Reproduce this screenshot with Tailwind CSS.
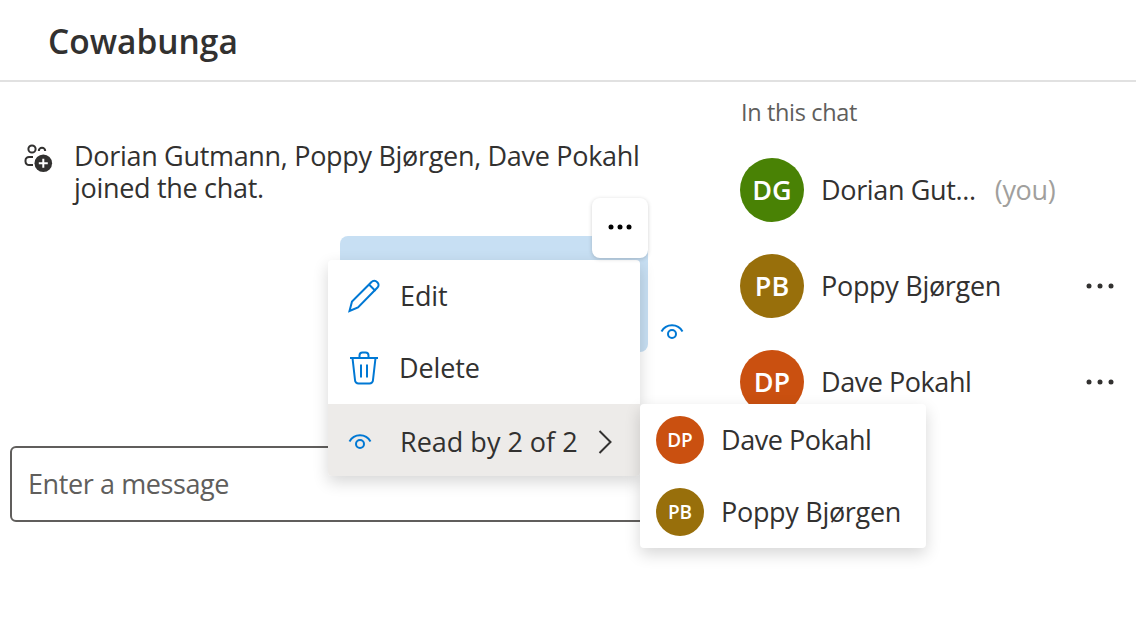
<!DOCTYPE html>
<html lang="en">

<head>
	<meta charset="UTF-8">
	<title>Cowabunga</title>
	<script src="https://cdn.jsdelivr.net/npm/@tailwindcss/browser@4"></script>
</head>

<body class="bg-white">
	<div class="relative w-[1136px] h-[640px] overflow-hidden bg-white text-[#323130] font-['Open_Sans','Noto_Sans',sans-serif] font-[380]">
		<header class="h-[82px] border-b-2 border-[#e1e1e1] pl-[48px] pt-[19px]">
			<h1 class="text-[33.500px] leading-[44px] font-semibold">Cowabunga</h1>
		</header>

		<div class="flex">
			<!-- chat column -->
			<main class="w-[741px] shrink-0 pt-[58px]">
				<div class="flex pl-[24px]">
					<svg class="w-[30px] h-[30px] mt-[3px] shrink-0" viewBox="0 0 30 30" fill="none" stroke="#323130" stroke-width="2">
						<circle cx="8" cy="6" r="3.600" />
						<path d="M14.800 8a3.200 3.200 0 0 1 6.400 0" />
						<path d="M9 14H5.500A3.500 3.500 0 0 0 1.500 17.500v1a3.500 3.500 0 0 0 4 3.500H9" />
						<circle cx="19.300" cy="20.300" r="8.800" fill="#323130" stroke="none" />
						<path d="M19.300 15.800v9M14.800 20.300h9" stroke="#fff" />
					</svg>
					<p class="ml-[20px] w-[600px] text-[27px] leading-[32px] tracking-[-0.310px]">Dorian Gutmann, Poppy Bjørgen, Dave Pokahl joined the chat.</p>
				</div>

				<div class="flex ml-[340px] mt-[32px] items-end">
					<div class="w-[308px] h-[116px] rounded-[8px] bg-[#c7dff3]"></div>
					<svg class="w-[24px] h-[16px] ml-[12px] mb-[12px]" viewBox="0 0 24 16" fill="none" stroke="#0078d4" stroke-width="2">
						<path d="M1.500 7.500a12 12 0 0 1 21 0" />
						<circle cx="12" cy="10" r="4" />
					</svg>
				</div>

				<div class="ml-[10px] mt-[94px] w-[700px] h-[76px] rounded-[6px] border-2 border-[#605e5c] flex items-center pl-[16px] text-[27px] tracking-[-0.400px] text-[#605e5c]">Enter a message</div>
			</main>

			<!-- participants -->
			<aside class="flex-1 pt-[13px]">
				<h2 class="text-[23.500px] leading-[34px] tracking-[-0.350px] text-[#605e5c]">In this chat</h2>
				<ul class="mt-[29px] flex flex-col gap-[32px]">
					<li class="flex items-center h-[64px] -ml-[1px]">
						<span class="w-[64px] h-[64px] rounded-full bg-[#498205] text-white text-[27px] font-[550] flex items-center justify-center">DG</span>
						<span class="ml-[17px] text-[27px] tracking-[-0.350px]">Dorian Gut...</span>
						<span class="ml-[19px] text-[27px] tracking-[-0.350px] text-[#a19f9d]">(you)</span>
					</li>
					<li class="flex items-center h-[64px] -ml-[1px]">
						<span class="w-[64px] h-[64px] rounded-full bg-[#986f0b] text-white text-[27px] font-[550] flex items-center justify-center">PB</span>
						<span class="ml-[17px] text-[27px] tracking-[-0.300px]">Poppy Bjørgen</span>
						<svg class="ml-auto mr-[22px] w-[28px] h-[6px]" viewBox="0 0 28 6" fill="#323130"><circle cx="3" cy="3" r="2.500" /><circle cx="14" cy="3" r="2.500" /><circle cx="25" cy="3" r="2.500" /></svg>
					</li>
					<li class="flex items-center h-[64px] -ml-[1px]">
						<span class="w-[64px] h-[64px] rounded-full bg-[#ca5010] text-white text-[27px] font-[550] flex items-center justify-center">DP</span>
						<span class="ml-[17px] text-[27px] tracking-[-0.450px]">Dave Pokahl</span>
						<svg class="ml-auto mr-[22px] w-[28px] h-[6px]" viewBox="0 0 28 6" fill="#323130"><circle cx="3" cy="3" r="2.500" /><circle cx="14" cy="3" r="2.500" /><circle cx="25" cy="3" r="2.500" /></svg>
					</li>
				</ul>
			</aside>
		</div>

		<!-- message actions button -->
		<button class="absolute left-[592px] top-[198px] z-30 w-[56px] h-[60px] rounded-[8px] bg-white shadow-[0_1px_4px_rgba(0,0,0,0.18)] flex items-center justify-center">
			<svg class="w-[24px] h-[6px] -mt-[2px]" viewBox="0 0 24 6" fill="#000"><circle cx="3" cy="3" r="2.500" /><circle cx="12" cy="3" r="2.500" /><circle cx="21" cy="3" r="2.500" /></svg>
		</button>

		<!-- message menu -->
		<div class="absolute left-[328px] top-[260px] z-20 w-[312px] h-[216px] rounded-[4px] bg-white shadow-[0_6px_16px_rgba(0,0,0,0.16)] flex flex-col text-[27px] tracking-[-0.100px]">
			<div class="h-[72px] pt-[1px] flex items-center">
				<svg class="ml-[20px] w-[32px] h-[34px] -mt-[1px]" viewBox="0 0 32 34" fill="none" stroke="#0078d4" stroke-width="2">
					<path d="M1.500 32l2.500-9.500L23.500 3a3.500 3.500 0 0 1 5.500 0l.5.500a3.500 3.500 0 0 1 0 5L10 28.500z" />
					<path d="M21 5.500l6.500 6.500" />
				</svg>
				<span class="ml-[20px]">Edit</span>
			</div>
			<div class="h-[72px] pt-[1px] flex items-center">
				<svg class="ml-[21px] w-[30px] h-[34px] -mt-[1px]" viewBox="0 0 30 34" fill="none" stroke="#0078d4" stroke-width="2">
					<path d="M1 7h28" />
					<path d="M10.500 7V4.500a3 3 0 0 1 3-3h3a3 3 0 0 1 3 3V7" />
					<path d="M3.500 7l2.500 22a3.500 3.500 0 0 0 3.500 3.500h11a3.500 3.500 0 0 0 3.500-3.500L26.500 7" />
					<path d="M12 13.500v13M18 13.500v13" />
				</svg>
				<span class="ml-[20px]">Delete</span>
			</div>
			<div class="h-[72px] pt-[4px] flex items-center bg-[#edebe9] rounded-b-[4px] tracking-normal">
				<svg class="ml-[20px] w-[24px] h-[16px]" viewBox="0 0 24 16" fill="none" stroke="#0078d4" stroke-width="2">
					<path d="M1.500 7.500a12 12 0 0 1 21 0" />
					<circle cx="12" cy="10" r="4" />
				</svg>
				<span class="ml-[28px]">Read by 2 of 2</span>
				<svg class="ml-[20px] w-[14px] h-[24px]" viewBox="0 0 14 24" fill="none" stroke="#323130" stroke-width="2"><path d="M1.500 1l11 11-11 11" /></svg>
			</div>
		</div>

		<!-- read by submenu -->
		<div class="absolute left-[640px] top-[404px] z-20 w-[286px] h-[144px] rounded-[4px] bg-white shadow-[0_6px_16px_rgba(0,0,0,0.16)] flex flex-col text-[27px]">
			<div class="h-[72px] flex items-center pl-[16px]">
				<span class="w-[48px] h-[48px] rounded-full bg-[#ca5010] text-white text-[19px] font-[550] flex items-center justify-center">DP</span>
				<span class="ml-[17px] tracking-[-0.450px]">Dave Pokahl</span>
			</div>
			<div class="h-[72px] flex items-center pl-[16px]">
				<span class="w-[48px] h-[48px] rounded-full bg-[#986f0b] text-white text-[19px] font-[550] flex items-center justify-center">PB</span>
				<span class="ml-[17px] tracking-[-0.300px]">Poppy Bjørgen</span>
			</div>
		</div>
	</div>
</body>

</html>
